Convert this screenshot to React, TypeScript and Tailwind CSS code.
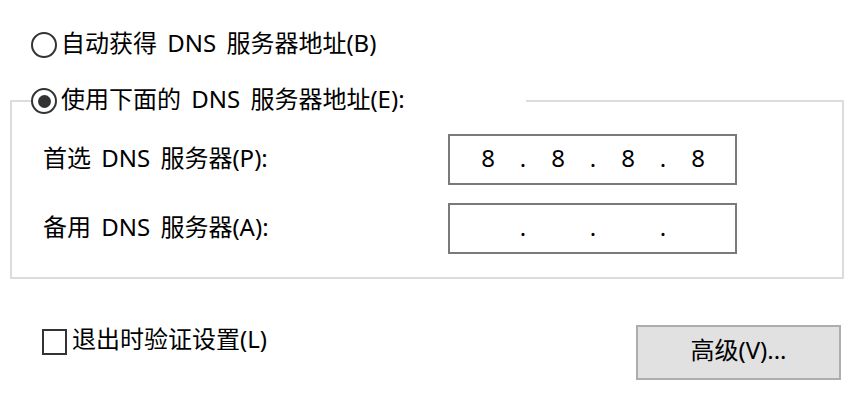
import React from "react";

const FONT = {
  fontFamily:
    '"Microsoft YaHei", "Noto Sans", "Noto Sans CJK SC", sans-serif',
};

function Radio({ checked }: { checked?: boolean }) {
  return (
    <span className="flex h-[26px] w-[26px] shrink-0 items-center justify-center rounded-full border-2 border-[#333333] bg-white">
      {checked && <span className="h-[13px] w-[13px] rounded-full bg-[#333333]" />}
    </span>
  );
}

function IpBox({ octets }: { octets: string[] }) {
  return (
    <div className="flex h-[51px] w-[289px] items-center border-2 border-[#7a7a7a] bg-white pb-[3px] pl-[18px] text-[24px] leading-none text-black">
      {octets.map((o, i) => (
        <React.Fragment key={i}>
          <span className="w-[40px] text-center">{o}</span>
          {i < 3 && <span className="w-[30px] text-center">.</span>}
        </React.Fragment>
      ))}
    </div>
  );
}

export default function App() {
  return (
    <div
      className="h-[401px] w-[860px] overflow-hidden bg-white pt-[31px] text-[24px] text-black [word-spacing:4px]"
      style={FONT}
    >
      {/* automatic DNS option */}
      <label className="ml-[31px] flex h-[28px] items-center gap-[4px] leading-none">
        <Radio />
        <span className="pb-[5px]">自动获得 DNS 服务器地址(B)</span>
      </label>

      {/* manual DNS group */}
      <fieldset className="ml-[10px] mt-[28px] w-[834px] border-2 border-[#dcdcdc] px-0 pb-[23px]">
        <legend className="ml-[19px] flex h-[28px] w-[495px] items-center gap-[4px] leading-none">
          <Radio checked />
          <span className="pb-[4px]">使用下面的 DNS 服务器地址(E):</span>
        </legend>

        <div className="mt-[19px] flex flex-col gap-[18px] pl-[31px]">
          <div className="flex items-center">
            <span className="w-[405px] pb-[4px] leading-none">首选 DNS 服务器(P):</span>
            <IpBox octets={["8", "8", "8", "8"]} />
          </div>
          <div className="flex items-center">
            <span className="w-[405px] pb-[4px] leading-none">备用 DNS 服务器(A):</span>
            <IpBox octets={["", "", "", ""]} />
          </div>
        </div>
      </fieldset>

      {/* footer */}
      <div className="mt-[46px] flex items-start justify-between pl-[42px] pr-[19px]">
        <label className="mt-[4px] flex h-[26px] items-center gap-[5px] leading-none">
          <span className="h-[26px] w-[25px] shrink-0 border-2 border-[#333333] bg-white" />
          <span className="pb-[6px] [word-spacing:0px]">退出时验证设置(L)</span>
        </label>
        <button className="flex h-[55px] w-[205px] items-center justify-center border-2 border-[#adadad] bg-[#e1e1e1] pb-[5px] text-[24px] leading-none text-black">
          高级(V)...
        </button>
      </div>
    </div>
  );
}
